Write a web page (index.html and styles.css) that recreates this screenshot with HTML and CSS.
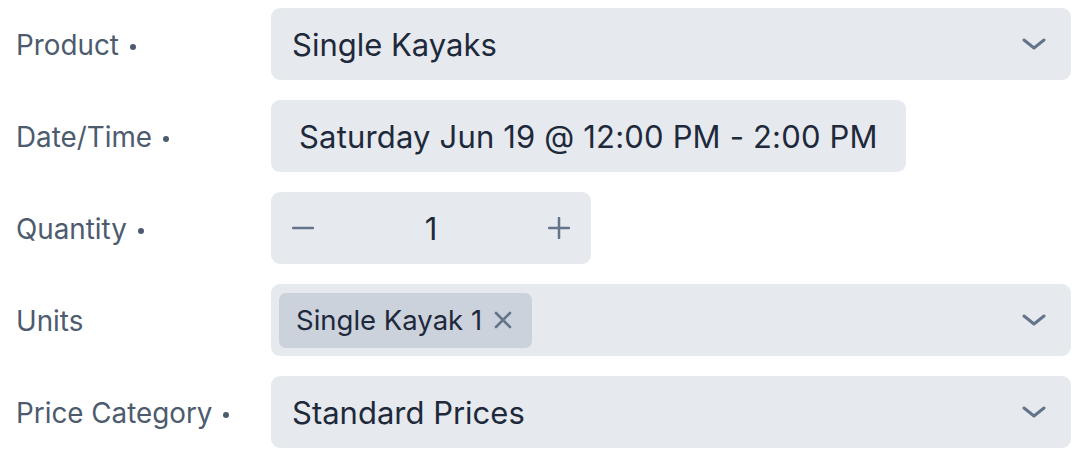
FILE: index.html
```html
<!DOCTYPE html>
<html lang="en">
<head>
<meta charset="utf-8">
<title>Booking form</title>
<link rel="stylesheet" href="styles.css">
</head>
<body>
<form class="form">
  <div class="label required">Product</div>
  <div class="field select">
    <span class="value">Single Kayaks</span>
    <svg class="chevron" viewBox="0 0 24 12" width="24" height="12"><path d="M2 2 L12 10 L22 2" fill="none" stroke="currentColor" stroke-width="3" stroke-linecap="round" stroke-linejoin="round"/></svg>
  </div>

  <div class="label required">Date/Time</div>
  <div class="field date">
    <span class="value">Saturday Jun 19 @ 12:00 PM - 2:00 PM</span>
  </div>

  <div class="label required">Quantity</div>
  <div class="field qty">
    <svg class="qbtn" viewBox="0 0 22 22" width="22" height="22"><path d="M1 11 H21" stroke="currentColor" stroke-width="2.5" stroke-linecap="round"/></svg>
    <span class="value">1</span>
    <svg class="qbtn" viewBox="0 0 22 22" width="22" height="22"><path d="M1 11 H21 M11 1 V21" stroke="currentColor" stroke-width="2.5" stroke-linecap="round"/></svg>
  </div>

  <div class="label">Units</div>
  <div class="field select units">
    <span class="chip">Single Kayak 1
      <svg class="x" viewBox="0 0 18 18" width="18" height="18"><path d="M2 2 L16 16 M16 2 L2 16" stroke="currentColor" stroke-width="2.6" stroke-linecap="round"/></svg>
    </span>
    <svg class="chevron" viewBox="0 0 24 12" width="24" height="12"><path d="M2 2 L12 10 L22 2" fill="none" stroke="currentColor" stroke-width="3" stroke-linecap="round" stroke-linejoin="round"/></svg>
  </div>

  <div class="label required">Price Category</div>
  <div class="field select">
    <span class="value">Standard Prices</span>
    <svg class="chevron" viewBox="0 0 24 12" width="24" height="12"><path d="M2 2 L12 10 L22 2" fill="none" stroke="currentColor" stroke-width="3" stroke-linecap="round" stroke-linejoin="round"/></svg>
  </div>
</form>
</body>
</html>
```

FILE: styles.css
```css
* { box-sizing: border-box; }
html, body { margin: 0; background: #ffffff; }
body {
  font-family: Inter, "Noto Sans", "Liberation Sans", sans-serif;
  padding: 8px 17px 16px 16px;
}
.form {
  display: grid;
  grid-template-columns: 255px 800px;
  grid-auto-rows: 72px;
  row-gap: 20px;
  align-items: center;
}
.label {
  font-size: 27.8px;
  color: #4d5b6e;
  display: flex;
  align-items: center;
  padding-top: 2px;
}
.label.required::after {
  content: "";
  width: 6px;
  height: 6px;
  border-radius: 50%;
  background: #4d5b6e;
  margin-left: 11px;
  margin-top: 3px;
}
.field {
  height: 72px;
  background: #e6e9ee;
  border-radius: 9px;
  display: flex;
  align-items: center;
  color: #1e293b;
}
.value { font-size: 31px; }
.select {
  justify-content: space-between;
  padding: 0 25px 0 21px;
}
.chevron { color: #64748b; flex: none; }
.date {
  justify-self: start;
  padding: 0 28px;
}
.date .value { letter-spacing: 0.17px; }
.qty {
  justify-self: start;
  width: 320px;
  justify-content: space-between;
  padding: 0 21px;
}
.qbtn { color: #64748b; }
.units { padding-left: 8px; }
.chip {
  height: 55px;
  background: #cbd2dc;
  border-radius: 7px;
  display: flex;
  align-items: center;
  padding: 0 20px 0 17px;
  font-size: 27.5px;
  color: #1e293b;
  gap: 12px;
}
.x { color: #64748b; }
```
